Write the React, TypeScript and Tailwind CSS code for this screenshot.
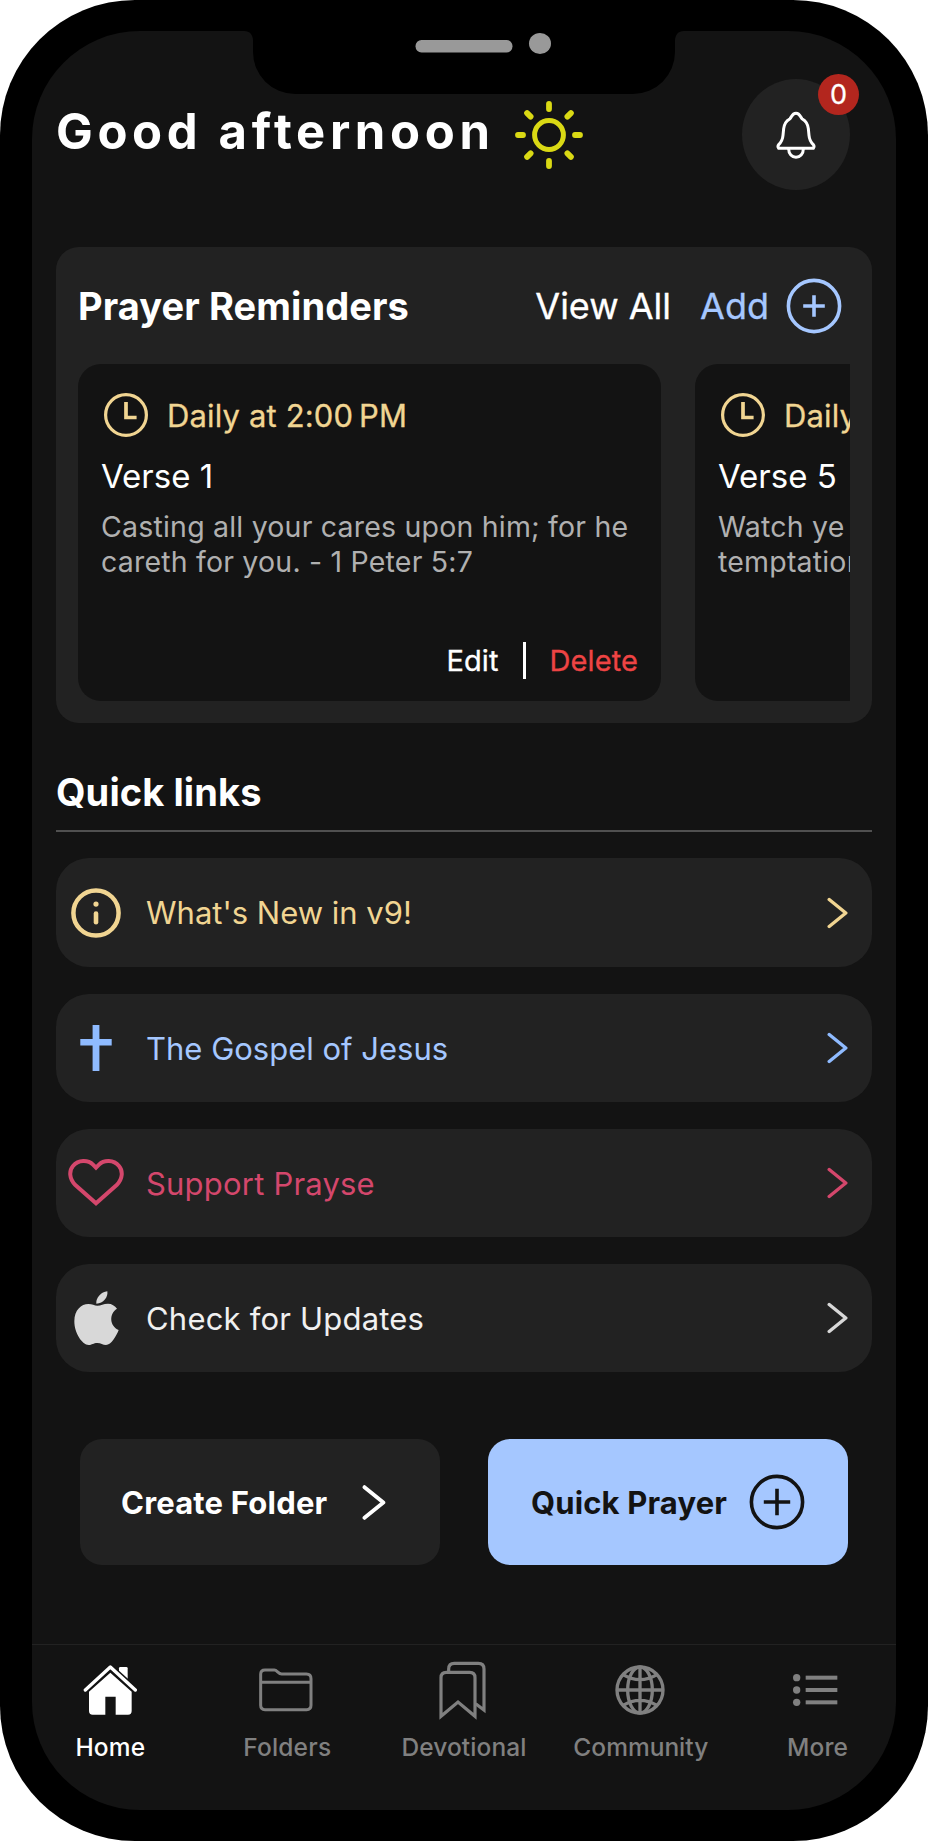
import type { ReactNode } from "react"
import { clsx } from "clsx"

type Reminder = {
  time: string
  title: string
  lines: string[]
}

type QuickLink = {
  label: string
  icon: ReactNode
  color: string
  chevron: string
  spacing: string
}

type Tab = {
  label: string
  icon: ReactNode
  spacing: string
}

const reminders: Reminder[] = [
  {
    time: "Daily at 2:00\u202fPM",
    title: "Verse 1",
    lines: ["Casting all your cares upon him; for he", "careth for you. - 1 Peter 5:7"],
  },
  {
    time: "Daily at 2:00\u202fPM",
    title: "Verse 5",
    lines: ["Watch ye and pray, lest ye enter into", "temptation. - Mark 14:38"],
  },
]

const SunIcon = () => (
  <svg className="size-[72px]" viewBox="-36 -36 72 72" fill="none" stroke="#dad914" strokeLinecap="round">
    <circle r="14.4" strokeWidth="5" />
    {[0, 45, 90, 135, 180, 225, 270, 315].map((angle) => (
      <path key={angle} d="M0 -31V-26" strokeWidth="5.8" transform={`rotate(${angle})`} />
    ))}
  </svg>
)

const BellIcon = () => (
  <svg className="h-[50px] w-[44px]" viewBox="0 0 132 150" fill="none" stroke="#fff" strokeWidth="9">
    <path
      d="M14 115H118C121 111 121 108 118 104C109 95 106 88 105 76L103 56C101 41 96 33 85 27C79 23 79 10 66 10C53 10 53 23 47 27C36 33 31 41 29 56L27 76C26 88 23 95 14 104C11 108 11 111 14 115Z"
      strokeLinejoin="round"
    />
    <path d="M44 117C44 132 54 142 66 142C78 142 88 132 88 117" />
  </svg>
)

const CirclePlusIcon = ({ className, arm }: { className: string; arm: number }) => (
  <svg className={className} viewBox="-28 -28 56 56" fill="none" stroke="currentColor" strokeWidth="3.6">
    <circle r="25.600" />
    <path d={`M${-arm} 0H${arm}M0 ${-arm}V${arm}`} />
  </svg>
)

const ClockIcon = () => (
  <svg className="size-[46px] shrink-0" viewBox="-23 -23 46 46" fill="none" stroke="currentColor" strokeWidth="3.2">
    <circle r="20.400" />
    <path d="M0 -13V2.500H10.600" strokeWidth="3.7" />
  </svg>
)

const ChevronIcon = ({ className }: { className: string }) => (
  <svg
    className={className}
    viewBox="0 0 22 32"
    fill="none"
    stroke="currentColor"
    strokeWidth="3.400"
    strokeLinecap="round"
    strokeLinejoin="round"
  >
    <path d="M2.200 2.500L18.800 16L2.200 29.500" />
  </svg>
)

const InfoIcon = () => (
  <svg className="size-[50px]" viewBox="-25 -25 50 50" fill="none" stroke="currentColor" strokeLinecap="round">
    <circle r="22.600" strokeWidth="4.500" />
    <circle cy="-8.900" r="2.600" fill="currentColor" stroke="none" />
    <path d="M0 0.500V9.300" strokeWidth="4.600" />
  </svg>
)

const CrossIcon = () => (
  <svg className="h-[46px] w-[32px] text-[#8fbbff]" viewBox="0 0 32 46" fill="currentColor">
    <path d="M12.600 0H19.400V14H31.700V20.500H19.400V46H12.600V20.500H0.300V14H12.600Z" />
  </svg>
)

const HeartIcon = () => (
  <svg className="h-[50px] w-[56px]" viewBox="0 0 168 150" fill="none" stroke="currentColor" strokeWidth="12">
    <path d="M84 136L22 81C3 62 3 38 15 24C31 5 60 5 75 20L84 29L93 20C108 5 137 5 153 24C165 38 165 62 146 81Z" />
  </svg>
)

const AppleIcon = () => (
  <svg className="h-[55px] w-[45px] text-[#d8d8d8]" viewBox="0 0 135 165" fill="currentColor">
    <path d="M100 1C103 18 88 38 67 38C65 20 82 3 100 1Z" />
    <path d="M70 44C81 44 88 38 102 38C113 38 123 44 129 53C104 69 107 105 134 117C128 133 112 162 96 162C86 162 81 156 70 156C58 156 54 162 44 162C25 162 1 127 1 91C1 57 22 39 43 39C54 39 62 44 70 44Z" />
  </svg>
)

const HomeIcon = () => (
  <svg className="h-[52px] w-[54px]" viewBox="249 133 162 156" fill="currentColor">
    <path d="M357 160V146Q357 142 361 142H379Q383 142 383 146V187L357 163Z" />
    <path d="M256 211L331 143L406 211" fill="none" stroke="#131313" strokeWidth="20" />
    <path d="M331 159L395 216V274Q395 285 384 285H347V231H316V285H278Q267 285 267 274V216Z" />
    <path
      d="M256 211L331 142L406 211"
      fill="none"
      stroke="currentColor"
      strokeWidth="10"
      strokeLinecap="round"
      strokeLinejoin="round"
    />
  </svg>
)

const FolderIcon = () => (
  <svg className="mr-[3px] h-[44px] w-[54px]" viewBox="776 145 162 132" fill="none" stroke="currentColor" strokeWidth="9">
    <path d="M781 164Q781 151 794 151H822C830 151 834 163 844 163H918Q932 163 932 177V257Q932 270 919 270H794Q781 270 781 257ZM781 188H932" />
  </svg>
)

const BookmarksIcon = () => (
  <svg className="mr-[5px] h-[60px] w-[48px]" viewBox="1313 121 144 180" fill="none" stroke="currentColor" strokeWidth="9.500">
    <path d="M1345 156V148Q1345 131 1362 131H1434Q1451 131 1451 148V271L1426 252" />
    <path d="M1322 290V174Q1322 158 1338 158H1408Q1424 158 1424 174V290L1373 247Z" />
  </svg>
)

const GlobeIcon = () => (
  <svg className="mr-px size-[50px]" viewBox="-75 -75 150 150" fill="none" stroke="currentColor" strokeWidth="10">
    <circle r="69" />
    <ellipse rx="37" ry="69" />
    <path d="M-70 0H70M0 -70V70M-51 -46Q0 -16 51 -46M-51 46Q0 16 51 46" />
  </svg>
)

const MoreIcon = () => (
  <svg className="mr-[5px] h-[36px] w-[46px]" viewBox="0 0 138 108" fill="currentColor">
    {[17, 54, 91].map((y) => (
      <g key={y}>
        <circle cx="14" cy={y} r="11" />
        <rect x="41" y={y - 6} width="95" height="12" />
      </g>
    ))}
  </svg>
)

const quickLinks: QuickLink[] = [
  {
    label: "What's New in v9!",
    icon: <InfoIcon />,
    color: "text-[#f1d592]",
    chevron: "text-[#f1d592]",
    spacing: "tracking-normal",
  },
  {
    label: "The Gospel of Jesus",
    icon: <CrossIcon />,
    color: "text-[#a5c7ff]",
    chevron: "text-[#8fbbff]",
    spacing: "tracking-normal",
  },
  {
    label: "Support Prayse",
    icon: <HeartIcon />,
    color: "text-[#d4476c]",
    chevron: "text-[#d4476c]",
    spacing: "tracking-[0.2px]",
  },
  {
    label: "Check for Updates",
    icon: <AppleIcon />,
    color: "text-[#f0f0f0]",
    chevron: "text-[#d8d8d8]",
    spacing: "tracking-[0.2px]",
  },
]

const tabs: Tab[] = [
  { label: "Home", icon: <HomeIcon />, spacing: "tracking-[0.2px]" },
  { label: "Folders", icon: <FolderIcon />, spacing: "tracking-[0.2px]" },
  { label: "Devotional", icon: <BookmarksIcon />, spacing: "tracking-[0.1px]" },
  { label: "Community", icon: <GlobeIcon />, spacing: "tracking-normal" },
  { label: "More", icon: <MoreIcon />, spacing: "tracking-[0.1px]" },
]

const Notch = () => (
  <div className="absolute top-0 left-[212px]">
    <svg className="h-[63px] w-[440px]" viewBox="0 0 440 63">
      <path d="M0 0H440C434 0 431 4 431 10V21A42 42 0 0 1 389 63H51A42 42 0 0 1 9 21V10C9 4 6 0 0 0Z" fill="#000" />
      <rect x="171.500" y="9" width="97" height="12.500" rx="6" fill="#999" />
      <ellipse cx="296" cy="12.500" rx="11" ry="10.500" fill="#999" />
    </svg>
  </div>
)

const ReminderCard = ({ reminder }: { reminder: Reminder }) => (
  <article className="flex h-[337px] w-[583px] shrink-0 flex-col rounded-[23px] bg-[#131313] px-[23px] pt-7">
    <div className="ml-[2px] flex h-[46px] items-center gap-[18px] text-[#f1d592]">
      <ClockIcon />
      <span className="text-[31px] leading-none tracking-[0.15px] whitespace-nowrap [-webkit-text-stroke:0.3px]">
        {reminder.time}
      </span>
    </div>
    <h3 className="mt-[18px] text-[33px] leading-[40px]">{reminder.title}</h3>
    <p className="mt-[13px] text-[28.5px] leading-[35px] tracking-[0.2px] whitespace-nowrap text-[#b0b0b0]">
      {reminder.lines.map((line) => (
        <span key={line} className="block">
          {line}
        </span>
      ))}
    </p>
    <div className="mt-auto mb-[22px] flex h-[37px] items-center justify-end text-[29px] leading-none tracking-[0.1px] [-webkit-text-stroke:0.3px]">
      <button>Edit</button>
      <span className="mx-[24px] h-[37px] w-[3px] bg-white" />
      <button className="text-[#ee4444]">Delete</button>
    </div>
  </article>
)

export default function App() {
  return (
    <div className="h-[1841px] w-[928px] overflow-hidden rounded-[135px] bg-black px-8 py-[31px] font-['Inter',sans-serif] text-white">
      <div className="relative flex h-[1779px] flex-col overflow-hidden rounded-[108px] bg-[#131313]">
        <Notch />

        <main className="flex flex-col px-6 pt-12">
          <header className="flex h-[111px] items-center">
            <h1 className="pb-[7px] text-[49px] leading-none font-bold tracking-[4.65px] whitespace-nowrap">
              Good afternoon
            </h1>
            <div className="ml-[18px]">
              <SunIcon />
            </div>
            <button className="relative mr-[22px] ml-auto flex h-[111px] w-[108px] items-center justify-center rounded-[50%] bg-[#222]">
              <BellIcon />
              <span className="absolute -top-[5px] -right-[9px] flex size-[41px] items-center justify-center rounded-full bg-[#b3261e] text-[27px] leading-none [-webkit-text-stroke:0.3px]">
                0
              </span>
            </button>
          </header>

          <section className="mt-[57px] h-[476px] rounded-[23px] bg-[#222] px-[22px]">
            <div className="flex h-[117px] items-center leading-none whitespace-nowrap">
              <h2 className="text-[38px] font-bold tracking-[0.1px]">Prayer Reminders</h2>
              <button className="ml-auto text-[36px] [-webkit-text-stroke:0.3px]">View All</button>
              <button className="mr-2 ml-[29px] flex items-center gap-[17px] text-[36px] text-[#a5c7ff] [-webkit-text-stroke:0.3px]">
                Add
                <CirclePlusIcon className="size-[56px]" arm={10.8} />
              </button>
            </div>
            <div className="flex gap-[34px] overflow-hidden">
              {reminders.map((r) => (
                <ReminderCard key={r.title} reminder={r} />
              ))}
            </div>
          </section>

          <div className="flex h-[109px] items-center border-b-2 border-[#505050] pt-[31px]">
            <h2 className="text-[38px] leading-none font-bold tracking-[0.1px]">Quick links</h2>
          </div>

          <nav className="mt-[26px] flex flex-col gap-[27px]">
            {quickLinks.map((link, i) => (
              <a
                key={link.label}
                className={clsx(
                  "flex items-center rounded-[33px] bg-[#222] pr-[23px] pl-3",
                  i === 0 ? "h-[109px]" : "h-[108px]",
                  link.color
                )}
              >
                <span className="flex w-[56px] justify-center">{link.icon}</span>
                <span className={clsx("ml-[22px] text-[31px] leading-none", link.spacing)}>{link.label}</span>
                <span className={clsx("ml-auto", link.chevron)}>
                  <ChevronIcon className="h-[32px] w-[22px]" />
                </span>
              </a>
            ))}
          </nav>

          <div className="mt-[67px] flex gap-[48px] px-6 text-[31px] leading-none font-bold whitespace-nowrap">
            <button className="flex h-[126px] w-[360px] items-center rounded-[22px] bg-[#222] pl-[41px]">
              <span className="tracking-[0.2px]">Create Folder</span>
              <ChevronIcon className="ml-[35px] h-[37px] w-[25px]" />
            </button>
            <button className="flex h-[126px] w-[360px] items-center rounded-[22px] bg-[#a5c7ff] pl-[43px] text-[#131313]">
              <span className="tracking-[0.15px]">Quick Prayer</span>
              <CirclePlusIcon className="ml-[22px] size-[56px]" arm={13.2} />
            </button>
          </div>
        </main>

        <footer className="mt-auto flex h-[166px] justify-center border-t border-[#222] pt-4">
          {tabs.map((tab, i) => (
            <a
              key={tab.label}
              className={clsx("flex w-[176.8px] shrink-0 flex-col items-center", i === 0 ? "text-white" : "text-[#808080]")}
            >
              <span className="flex h-[58px] items-center">{tab.icon}</span>
              <span className={clsx("mt-[14px] text-[24.5px] leading-7 font-medium", tab.spacing)}>{tab.label}</span>
            </a>
          ))}
        </footer>
      </div>
    </div>
  )
}
